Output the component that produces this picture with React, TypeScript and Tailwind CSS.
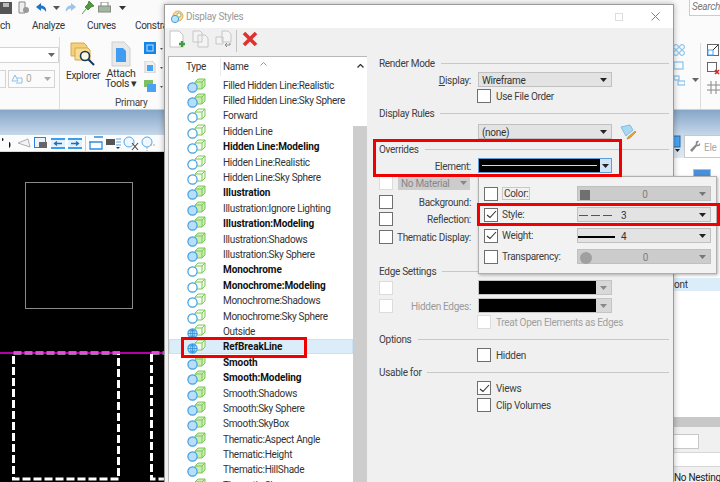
import type { ReactNode } from "react";

const rows: [string, boolean, string][] = [
  ["Filled Hidden Line:Realistic", false, "filled"],
  ["Filled Hidden Line:Sky Sphere", false, "filled"],
  ["Forward", false, "plain"],
  ["Hidden Line", false, "plain"],
  ["Hidden Line:Modeling", true, "plain"],
  ["Hidden Line:Realistic", false, "plain"],
  ["Hidden Line:Sky Sphere", false, "plain"],
  ["Illustration", true, "filled"],
  ["Illustration:Ignore Lighting", false, "filled"],
  ["Illustration:Modeling", true, "filled"],
  ["Illustration:Shadows", false, "filled"],
  ["Illustration:Sky Sphere", false, "filled"],
  ["Monochrome", true, "plain"],
  ["Monochrome:Modeling", true, "plain"],
  ["Monochrome:Shadows", false, "plain"],
  ["Monochrome:Sky Sphere", false, "plain"],
  ["Outside", false, "globe"],
  ["RefBreakLine", true, "globe"],
  ["Smooth", true, "filled"],
  ["Smooth:Modeling", true, "filled"],
  ["Smooth:Shadows", false, "filled"],
  ["Smooth:Sky Sphere", false, "filled"],
  ["Smooth:SkyBox", false, "filled"],
  ["Thematic:Aspect Angle", false, "filled"],
  ["Thematic:Height", false, "filled"],
  ["Thematic:HillShade", false, "filled"],
  ["Thematic:Slope", false, "filled"],
];

const StyleIcon = ({ kind }: { kind: string }) => (
  <svg width="24" height="16" viewBox="0 0 24 16" className="shrink-0">
    <path d="M10 5 L13 2 H20 V9 L17 12 H10 Z" fill={kind === "filled" ? "#c9eeb0" : "#f4fcee"} stroke="#7cc65a" strokeWidth="1" />
    <path d="M10 5 H17 V12 M17 5 L20 2" fill="none" stroke="#7cc65a" strokeWidth="1" />
    <circle cx="7.5" cy="10.5" r="4.6" fill={kind === "plain" ? "#ffffff" : "#b9defa"} stroke="#3f9fe3" strokeWidth="1.2" />
    {kind === "globe" && (
      <path d="M3 10.5 H12 M7.5 6 V15 M4.2 7.8 H10.8 M4.2 13.2 H10.8 M7.5 6 C5 8 5 13 7.5 15 C10 13 10 8 7.5 6" fill="none" stroke="#2f8fd8" strokeWidth="0.8" />
    )}
  </svg>
);

const Caret = ({ color = "#222" }: { color?: string }) => (
  <svg width="7" height="4" viewBox="0 0 7 4" className="shrink-0">
    <path d="M0 0 H7 L3.5 4 Z" fill={color} />
  </svg>
);

const Check = ({ checked = false, faded = false }: { checked?: boolean; faded?: boolean }) => (
  <div className={`flex h-[14px] w-[14px] shrink-0 items-center justify-center border bg-white ${faded ? "border-[#dcdcdc]" : "border-[#6f6f6f]"}`}>
    {checked && (
      <svg width="11" height="9" viewBox="0 0 11 9">
        <path d="M1 5 L4 7.5 L10 1" fill="none" stroke="#333" strokeWidth="1.1" />
      </svg>
    )}
  </div>
);

const Heading = ({ title }: { title: string }) => (
  <div className="flex h-[14px] items-center gap-[6px] pl-[12px] pr-[4px]">
    <span className="translate-y-px text-[#404040]">{title}</span>
    <div className="h-px flex-1 bg-[#c8c8c8]" />
  </div>
);

const Select = ({ children, disabled = false }: { children?: ReactNode; disabled?: boolean }) => (
  <div className={`flex h-[15px] w-[134px] shrink-0 items-center justify-between border border-[#c0c0c0] pr-[4px] ${disabled ? "bg-[#cccccc] text-[#808080]" : "bg-[#e3e3e3] text-[#333]"}`}>
    <div className="flex min-w-0 flex-1 translate-y-px items-center pl-[3px]">{children}</div>
    <Caret color={disabled ? "#777" : "#222"} />
  </div>
);

const BlackSelect = () => (
  <div className="flex h-[15px] w-[134px] items-center border border-[#c4c4c4] bg-[#d8d8d8] pr-[4px]">
    <div className="h-full flex-1 bg-black" />
    <div className="flex w-[11px] justify-end">
      <Caret color="#888" />
    </div>
  </div>
);

const Field = ({ label, left, children, faded = false, className = "" }: { label?: ReactNode; left?: ReactNode; children?: ReactNode; faded?: boolean; className?: string }) => (
  <div className={`flex h-[15px] items-center pl-[12px] ${className}`}>
    <div className="w-[14px] shrink-0">{left}</div>
    <div className={`flex w-[78px] shrink-0 translate-y-px justify-end whitespace-nowrap ${faded ? "text-[#9a9a9a]" : "text-[#404040]"}`}>{label}</div>
    <div className="ml-[7px] flex items-center">{children}</div>
  </div>
);

const CheckLabel = ({ label, checked = false, faded = false, className = "" }: { label: string; checked?: boolean; faded?: boolean; className?: string }) => (
  <div className={`flex h-[14px] items-center gap-[5px] pl-[110px] ${className}`}>
    <Check checked={checked} faded={faded} />
    <span className={`translate-y-px ${faded ? "text-[#a0a0a0]" : "text-[#404040]"}`}>{label}</span>
  </div>
);

const PopRow = ({ label, checked = false, children, disabled = false }: { label: ReactNode; checked?: boolean; children: ReactNode; disabled?: boolean }) => (
  <div className="flex h-[21px] items-center pl-[5px]">
    <Check checked={checked} />
    <div className="ml-[4px] w-[75px] text-[#404040]">{label}</div>
    <Select disabled={disabled}>{children}</Select>
  </div>
);

const Ribbon = () => (
  <div className="flex h-[73px] border-b border-[#d0d0d0] bg-[#fbfbfb]">
    <div className="flex w-[60px] flex-col gap-[7px] border-r border-[#dcdcdc] pt-[10px]">
      <div className="flex h-[16px] items-center justify-end border border-l-0 border-[#d4d4d4] bg-white pr-[3px]">
        <Caret color="#666" />
      </div>
      <div className="flex gap-[2px]">
        <div className="h-[18px] w-[6px] border border-l-0 border-[#d4d4d4]" />
        <div className="flex h-[18px] w-[47px] items-center gap-[3px] border border-[#d4d4d4] pl-[2px] pr-[3px] text-[#aaa]">
          <svg width="12" height="11" viewBox="0 0 12 11">
            <path d="M4 1 L7 7 H1 Z M6 4 H11 V9 H5" fill="none" stroke="#8cc0e8" />
          </svg>
          <span className="flex-1">0</span>
          <Caret color="#aaa" />
        </div>
      </div>
    </div>
    <div className="flex w-[104px] flex-col">
      <div className="flex h-[61px] pt-[4px]">
        <div className="ml-[6px] flex w-[36px] flex-col items-center">
          <svg width="26" height="26" viewBox="0 0 26 26">
            <path d="M1 2 H14 L17 5 V15 H1 Z" fill="#f4cf7c" stroke="#d8a94a" />
            <path d="M5 7 H18 L20 9 V19 H5 Z" fill="#f9dd97" stroke="#d8a94a" />
            <circle cx="15" cy="15" r="4.5" fill="#fff7da" stroke="#12385e" strokeWidth="1.6" />
            <path d="M18.5 18.5 L24 24" stroke="#12385e" strokeWidth="2" />
          </svg>
          <span className="mt-[4px] text-[#333]">Explorer</span>
        </div>
        <div className="ml-[4px] flex w-[36px] flex-col items-center">
          <svg width="20" height="26" viewBox="0 0 20 26">
            <path d="M1 1 H13 L19 7 V25 H1 Z" fill="#e8e8e8" stroke="#cfcfcf" />
            <path d="M5 7 H12 L15 10 V21 H5 Z" fill="#3f9cf0" />
          </svg>
          <span className="mt-[2px] whitespace-nowrap text-center text-[10.5px] leading-[10px] text-[#333]">
            Attach
            <br />
            Tools ▾
          </span>
        </div>
        <div className="ml-[6px] flex flex-col gap-[7px] pt-[1px]">
          <svg width="20" height="12" viewBox="0 0 20 12">
            <rect x="0" y="0" width="12" height="12" fill="#1384e8" />
            <rect x="3" y="3" width="6" height="6" fill="none" stroke="#bfe0fb" />
            <path d="M16 6 H19 L17.5 8 Z" fill="#555" />
          </svg>
          <svg width="20" height="12" viewBox="0 0 20 12">
            <path d="M1 0 H8 L11 3 V12 H1 Z" fill="#f0f0f0" stroke="#ccc" />
            <rect x="3" y="4" width="6" height="6" fill="#4aa3f0" />
            <path d="M16 6 H19 L17.5 8 Z" fill="#555" />
          </svg>
          <svg width="20" height="12" viewBox="0 0 20 12">
            <rect x="0" y="0" width="9" height="7" fill="#7fbf63" />
            <rect x="3" y="4" width="9" height="8" fill="#4aa3f0" />
            <path d="M16 6 H19 L17.5 8 Z" fill="#555" />
          </svg>
        </div>
      </div>
      <div className="pl-[55px] text-[#444]">Primary</div>
    </div>
    <div className="w-[509px]" />
    <div className="flex flex-1 pt-[6px]">
      <div className="flex w-[28px] border-r border-[#dcdcdc]">
        <svg width="12" height="48" viewBox="0 0 12 48">
          <g fill="none" stroke="#6fb8ee">
            <circle cx="3" cy="4" r="2.4" />
            <circle cx="9" cy="4" r="2.4" />
            <circle cx="3" cy="10" r="2.4" />
            <circle cx="9" cy="10" r="2.4" />
            <rect x="1" y="19" width="9" height="7" />
            <rect x="1" y="33" width="5" height="4" />
            <rect x="5" y="38" width="7" height="4" />
          </g>
        </svg>
        <div className="ml-[7px] mt-[35px]">
          <Caret color="#666" />
        </div>
      </div>
      <div className="flex flex-col gap-[6px] pl-[6px] pt-[1px]">
        <svg width="12" height="12" viewBox="0 0 12 12">
          <rect x="0.5" y="0.5" width="11" height="11" fill="#fff" stroke="#666" />
          <path d="M6 6 L11 1" stroke="#222" />
          <rect x="1" y="6" width="5" height="5" fill="none" stroke="#4aa3f0" />
        </svg>
        <svg width="13" height="13" viewBox="0 0 13 13">
          <rect x="0.5" y="0.5" width="9" height="9" fill="#fff" stroke="#666" />
          <path d="M8 8 L12 12 M12 8 L8 12" stroke="#e02020" strokeWidth="1.6" />
        </svg>
        <svg width="13" height="13" viewBox="0 0 13 13">
          <path d="M0 4 H13 M0 9 H13 M4 0 V13 M9 0 V13" stroke="#888" />
        </svg>
      </div>
    </div>
  </div>
);

const ViewToolbar = () => (
  <div className="flex h-[17px] items-center border-b border-[#d8d8d8] bg-[#fcfcfc]">
    <svg width="14" height="12" viewBox="0 0 14 12" className="shrink-0">
      <path d="M2 1 C4 1 4 4 2 4 Z M9 5 C11 5 11 10 9 11 Z" fill="#111" />
    </svg>
    <svg width="14" height="11" viewBox="0 0 14 11" className="ml-[3px] shrink-0">
      <path d="M1 5 L11 1 L13 9 Z" fill="#f4f4f4" stroke="#b0b0b0" />
    </svg>
    <svg width="13" height="12" viewBox="0 0 13 12" className="ml-[3px] shrink-0">
      <rect x="0.5" y="0.5" width="11" height="10" fill="#eaf2fc" stroke="#2f7fdc" />
      <rect x="5" y="5" width="8" height="6" fill="#666" />
    </svg>
    <svg width="14" height="11" viewBox="0 0 14 11" className="ml-[4px] shrink-0">
      <rect width="14" height="11" fill="#e4f2fd" />
      <path d="M0 1 H14 M0 10 H14" stroke="#3aa0ee" strokeWidth="2" />
      <path d="M11 5.5 H4 M6 3.5 L3.5 5.5 L6 7.5" fill="none" stroke="#1870c0" strokeWidth="1.3" />
    </svg>
    <svg width="14" height="11" viewBox="0 0 14 11" className="ml-[3px] shrink-0">
      <rect width="14" height="11" fill="#e4f2fd" />
      <path d="M0 1 H14 M0 10 H14" stroke="#3aa0ee" strokeWidth="2" />
      <path d="M3 5.5 H10 M8 3.5 L10.5 5.5 L8 7.5" fill="none" stroke="#1870c0" strokeWidth="1.3" />
    </svg>
    <div className="ml-[3px] h-[15px] w-px shrink-0 bg-[#cccccc]" />
    <svg width="15" height="14" viewBox="0 0 15 14" className="ml-[3px] shrink-0">
      <path d="M5 1 H14 M0 6 H13 V13 H1 V6" fill="none" stroke="#2f8fe0" strokeWidth="1.3" />
    </svg>
    <svg width="15" height="12" viewBox="0 0 15 12" className="ml-[2px] shrink-0">
      <rect x="0" y="2" width="9" height="6" fill="#555" />
      <path d="M10 2 H15 M10 5 H15 M10 8 H15" stroke="#5aa8e8" />
      <path d="M10 10 H14 L12 12 Z" fill="#333" />
    </svg>
    <svg width="17" height="15" viewBox="0 0 17 15" className="ml-[2px] shrink-0">
      <circle cx="6" cy="6" r="5" fill="#f0f8ff" stroke="#55a8e8" />
      <path d="M9 7 L15 14 M15 7 L9 14" stroke="#444" strokeWidth="1.1" />
    </svg>
    <svg width="15" height="15" viewBox="0 0 15 15" className="ml-[1px] shrink-0">
      <circle cx="6" cy="6" r="5" fill="#f0f8ff" stroke="#55a8e8" />
      <path d="M6 11 V15 M9 9 H15" stroke="#aaa" strokeDasharray="2 1" />
    </svg>
  </div>
);

const Canvas = () => (
  <div className="relative h-[330px] overflow-hidden bg-black">
    <div className="absolute left-[25px] top-[30px] h-[127px] w-[108px] border border-[#8a8a8a]" />
    <svg width="164" height="330" viewBox="0 0 164 330" className="absolute left-0 top-0">
      <g fill="none" stroke="#ffffff" strokeWidth="3" strokeDasharray="8 3">
        <rect x="13.5" y="201" width="105" height="126" />
        <rect x="151.5" y="201" width="60" height="126" />
      </g>
    </svg>
    <div className="absolute left-0 top-[200px] h-[2px] w-full bg-[#f000e0] opacity-75" />
  </div>
);

const RightPanel = () => (
  <div className="flex flex-1 flex-col bg-white text-[#333]">
    <div className="flex h-[23px] bg-gradient-to-b from-[#c6d8ea] to-[#dfe9f3]">
      <svg width="10" height="17" viewBox="0 0 10 17" className="shrink-0">
        <rect x="0" y="1" width="7" height="11" fill="#4aa3f0" stroke="#2a6a9e" />
        <path d="M2 14 H7 L4.5 17 Z" fill="#222" />
      </svg>
      <div className="ml-px flex flex-1 items-center gap-[3px] border border-r-0 border-[#c8c8c8] bg-white pl-[4px] text-[#aaa]">
        <svg width="12" height="13" viewBox="0 0 12 13" className="shrink-0">
          <path d="M10 1 C7 0 6 3 7 4 L1 10 L3 12 L8 6 C10 7 12 5 11 3 L9 5 L8 4 Z" fill="#888" />
        </svg>
        <span className="translate-y-px">Ele</span>
      </div>
    </div>
    <div className="h-[120px] pl-[20px] pt-[11px]">
      <div className="h-[8px] w-[18px] border border-[#9cc4e8] bg-[#4a90d8]" />
    </div>
    <div className="flex h-[13px] items-center bg-[#dcedfa] pl-[1px] leading-none">ont</div>
    <div className="h-[126px]" />
    <div className="h-[10px] bg-[#c8c8c8]" />
    <div className="flex-1 overflow-hidden bg-[#f0f0f0] pt-[7px]">
      <div className="h-[15px] w-[26px] border border-l-0 border-[#c8c8c8] bg-white" />
      <div className="mt-[3px] h-[15px] border-y border-[#d8d8d8] bg-white" />
      <div className="mt-[6px] whitespace-nowrap pl-[1px] text-[#222]">No Nesting</div>
    </div>
  </div>
);

const Dialog = () => (
  <div className="absolute left-[164px] top-[4px] flex h-[478px] w-[510px] flex-col overflow-hidden border-l border-r border-t border-[#9a9a9a] bg-[#f0f0f0] shadow-[0_0_6px_rgba(0,0,0,0.3)]">
    <div className="flex h-[23px] shrink-0 items-center bg-white pl-[5px]">
      <svg width="14" height="14" viewBox="0 0 14 14">
        <circle cx="8" cy="6" r="5" fill="#f7d8a8" stroke="#f0a850" />
        <circle cx="5" cy="9" r="3.6" fill="#bfe3fa" stroke="#3f9fe3" />
        <circle cx="9" cy="5" r="2" fill="#fff" stroke="#8cc46a" />
      </svg>
      <span className="ml-[2px] text-[#9a9a9a]">Display Styles</span>
      <div className="ml-auto flex items-center gap-[28px] pr-[13px]">
        <div className="h-[8px] w-[8px] border border-[#dddddd]" />
        <svg width="9" height="9" viewBox="0 0 9 9">
          <path d="M0.5 0.5 L8.5 8.5 M8.5 0.5 L0.5 8.5" stroke="#808080" />
        </svg>
      </div>
    </div>
    <div className="flex h-[28px] shrink-0 items-start pl-[4px] pt-[2px]">
      <svg width="18" height="18" viewBox="0 0 18 18">
        <path d="M1 1 H10 L14 5 V17 H1 Z" fill="#fff" stroke="#c4c4c4" />
        <path d="M13 11 V17 M10 14 H16" stroke="#3f9e3f" strokeWidth="2.4" />
      </svg>
      <svg width="17" height="18" viewBox="0 0 17 18" className="ml-[5px]">
        <path d="M1 1 H8 L10 3 V12 H1 Z M6 5 H13 L16 8 V17 H6 Z" fill="#f4f4f4" stroke="#c6c6c6" />
      </svg>
      <svg width="17" height="17" viewBox="0 0 17 17" className="ml-[6px]">
        <path d="M7 1 H13 L16 4 V12 H7 Z M1 7 H8 V14 H1 Z" fill="#f4f4f4" stroke="#c6c6c6" />
        <path d="M15 13 V15 H10 M12 13 L10 15 L12 17" fill="none" stroke="#8a8a8a" />
      </svg>
      <div className="ml-[4px] h-[22px] w-px bg-[#c4c4c4]" />
      <svg width="16" height="16" viewBox="0 0 16 16" className="ml-[5px] mt-px">
        <path d="M2 2 L14 14 M14 2 L2 14" stroke="#e0312f" strokeWidth="3.6" />
      </svg>
    </div>
    <div className="flex min-h-0 flex-1">
      <div className="ml-[3px] flex w-[199px] shrink-0 overflow-hidden border-l border-t border-[#b8b8b8] bg-white">
        <div className="w-[184px] shrink-0">
          <div className="flex h-[20px] items-center">
            <div className="w-[52px] border-r border-[#ececec] pr-[14px] text-right leading-[18px] text-[#333]">Type</div>
            <div className="flex flex-1 items-center pl-[2px] text-[#333]">
              Name
              <svg width="7" height="4" viewBox="0 0 7 4" className="ml-[12px] -mt-[6px]">
                <path d="M0.5 3.5 L3.5 0.5 L6.5 3.5" fill="none" stroke="#999" />
              </svg>
            </div>
          </div>
          {rows.map(([name, bold, kind], i) => (
            <div key={i} className={`flex h-[15.4px] items-center border ${name === "RefBreakLine" ? "border-[#c6e2f8] bg-[#dcedfa]" : "border-transparent"}`}>
              <div className="ml-[15px] w-[38px] shrink-0">
                <StyleIcon kind={kind} />
              </div>
              <span className={`translate-y-px whitespace-nowrap ${bold ? "font-bold tracking-[-0.1px] text-[#111]" : "text-[#333]"}`}>{name}</span>
            </div>
          ))}
        </div>
        <div className="flex w-[15px] shrink-0 flex-col items-center bg-white">
          <svg width="7" height="4" viewBox="0 0 7 4" className="mt-[7px]">
            <path d="M0.5 3.5 L3.5 0.5 L6.5 3.5" fill="none" stroke="#333" strokeWidth="1.3" />
          </svg>
          <div className="mt-[58px] w-full flex-1 bg-[#cdcdcd]" />
        </div>
      </div>
      <div className="min-w-0 flex-1">
        <Heading title="Render Mode" />
        <Field label={<span><u>D</u>isplay:</span>} className="mt-[2px]">
          <Select>Wireframe</Select>
        </Field>
        <CheckLabel label="Use File Order" className="mt-[2px]" />
        <div className="mt-[3px]">
          <Heading title="Display Rules" />
        </div>
        <Field className="mt-[4px]">
          <Select>(none)</Select>
          <svg width="17" height="16" viewBox="0 0 17 16" className="ml-[8px]">
            <path d="M1 3 L10 1 L13 6 L6 12 Z" fill="#a9d8f5" stroke="#7dbde8" />
            <path d="M15 7 L8 13 L7 15 L10 14 L16 8 Z" fill="#f0a030" stroke="#b87a20" strokeWidth="0.6" />
          </svg>
        </Field>
        <div className="mt-[3px]">
          <Heading title="Overrides" />
        </div>
        <Field label="Element:" className="mt-[2px]">
          <div className="flex h-[15px] w-[134px] items-center border border-[#5a9fd8] bg-[#cfe4f6]">
            <div className="flex h-full flex-1 items-center bg-black px-[3px]">
              <div className="h-px w-full bg-[#d8d8d8]" />
            </div>
            <div className="flex w-[11px] justify-center">
              <Caret />
            </div>
          </div>
        </Field>
        <div className="mt-[3px] flex h-[14px] items-center pl-[12px]">
          <Check faded />
          <div className="ml-[5px] flex h-[14px] w-[72px] items-center justify-between bg-[#cccccc] px-[3px] text-[#888]">
            <span className="translate-y-px">No Material</span>
            <Caret color="#888" />
          </div>
        </div>
        <Field label="Background:" left={<Check />} className="mt-[4px]" />
        <Field label="Reflection:" left={<Check />} className="mt-[2px]" />
        <Field label="Thematic Display:" left={<Check />} className="mt-[3px]" />
        <div className="mt-[20px]">
          <Heading title="Edge Settings" />
        </div>
        <Field left={<Check faded />} className="mt-[2px]">
          <BlackSelect />
        </Field>
        <Field label="Hidden Edges:" left={<Check faded />} faded className="mt-[3px]">
          <BlackSelect />
        </Field>
        <CheckLabel label="Treat Open Elements as Edges" faded className="mt-[2px]" />
        <div className="mt-[3px]">
          <Heading title="Options" />
        </div>
        <CheckLabel label="Hidden" className="mt-[2px]" />
        <div className="mt-[3px]">
          <Heading title="Usable for" />
        </div>
        <CheckLabel label="Views" checked className="mt-[2px]" />
        <CheckLabel label="Clip Volumes" className="mt-[3px]" />
      </div>
    </div>
  </div>
);

const Popup = () => (
  <div className="absolute left-[478px] top-[176px] flex h-[98px] w-[239px] flex-col justify-center border border-[#b0b0b0] bg-[#f2f2f2] shadow-[1px_1px_3px_rgba(0,0,0,0.3)]">
    <PopRow label={<span className="border border-[#c8c8c8] px-px">Color:</span>} disabled>
      <div className="flex w-full items-center">
        <div className="-ml-px h-[10px] w-[10px] bg-[#707070]" />
        <span className="flex-1 pl-[1px] text-center">0</span>
      </div>
    </PopRow>
    <PopRow label="Style:" checked>
      <div className="-ml-[2px] flex items-center gap-[3px]">
        <div className="h-px w-[9px] bg-[#555]" />
        <div className="h-px w-[9px] bg-[#555]" />
        <div className="h-px w-[9px] bg-[#555]" />
        <span className="ml-[6px]">3</span>
      </div>
    </PopRow>
    <PopRow label="Weight:" checked>
      <div className="-ml-[3px] flex items-center">
        <div className="h-[2px] w-[37px] bg-black" />
        <span className="ml-[6px]">4</span>
      </div>
    </PopRow>
    <PopRow label="Transparency:" disabled>
      <div className="flex w-full items-center">
        <div className="-ml-px h-[12px] w-[12px] rounded-full bg-[#a0a0a0]" />
        <span className="flex-1 text-center">0</span>
      </div>
    </PopRow>
  </div>
);

export default function App() {
  return (
    <div className="relative h-[482px] w-[720px] overflow-hidden bg-white text-[10px] leading-none tracking-[-0.3px]" style={{ fontFamily: 'Roboto, "Open Sans", sans-serif' }}>
      <div className="flex h-[15px] items-center justify-between bg-[#fafafa]">
        <div className="flex items-center">
          <svg width="12" height="12" viewBox="0 0 12 12">
            <rect width="12" height="12" fill="#555" />
            <rect x="3" y="1" width="6" height="4" fill="#bbb" />
          </svg>
          <svg width="12" height="13" viewBox="0 0 12 13" className="ml-[6px]">
            <path d="M1 1 H7 V12 H1 Z" fill="#eee" stroke="#888" />
            <circle cx="8" cy="9" r="3" fill="#999" />
          </svg>
          <svg width="11" height="10" viewBox="0 0 11 10" className="ml-[6px]">
            <path d="M0 4 L5 0 V2.5 C8 2.5 11 5 10 9 C9 7 7 5.5 5 5.5 V8 Z" fill="#1f74c8" />
          </svg>
          <div className="ml-[6px]">
            <Caret color="#555" />
          </div>
          <svg width="11" height="10" viewBox="0 0 11 10" className="ml-[5px]">
            <path d="M11 4 L6 0 V2.5 C3 2.5 0 5 1 9 C2 7 4 5.5 6 5.5 V8 Z" fill="#9cc4e8" />
          </svg>
          <svg width="12" height="13" viewBox="0 0 12 13" className="ml-[6px]">
            <path d="M7 0 L12 5 L9 6 L6 9 L3 6 L6 3 Z M4 8 L0 13" fill="#4f9a3c" stroke="#3d7e2c" strokeWidth="0.8" />
          </svg>
          <svg width="13" height="12" viewBox="0 0 13 12" className="ml-[4px]">
            <rect x="3" y="0" width="7" height="5" fill="#fff" stroke="#888" />
            <rect x="0.5" y="4" width="12" height="6" fill="#9fb89f" stroke="#888" />
          </svg>
          <div className="ml-[8px]">
            <Caret color="#333" />
          </div>
        </div>
        <div className="flex h-[16px] w-[31px] items-center border-b border-l border-[#cccccc] bg-white pl-[2px] italic text-[#777]">Search</div>
      </div>
      <div className="flex h-[22px] items-center bg-[#fbfbfb] text-[#333]">
        <span className="w-[32px]">ch</span>
        <span className="w-[55px]">Analyze</span>
        <span className="w-[48px]">Curves</span>
        <span>Constraints</span>
      </div>
      <Ribbon />
      <div className="h-[25px] bg-gradient-to-b from-[#86a6c8] to-[#c6d8ea]" />
      <div className="flex">
        <div className="w-[164px] shrink-0">
          <ViewToolbar />
          <Canvas />
        </div>
        <div className="w-[509px] shrink-0" />
        <RightPanel />
      </div>
      <Dialog />
      <Popup />
      <div className="absolute left-[373px] top-[139px] h-[38px] w-[249px] border-[3px] border-[#f00000]" />
      <div className="absolute left-[477px] top-[203px] h-[23px] w-[243px] border-[3px] border-[#f00000]" />
      <div className="absolute left-[181px] top-[337px] h-[21px] w-[126px] border-[3px] border-[#f00000]" />
    </div>
  );
}
